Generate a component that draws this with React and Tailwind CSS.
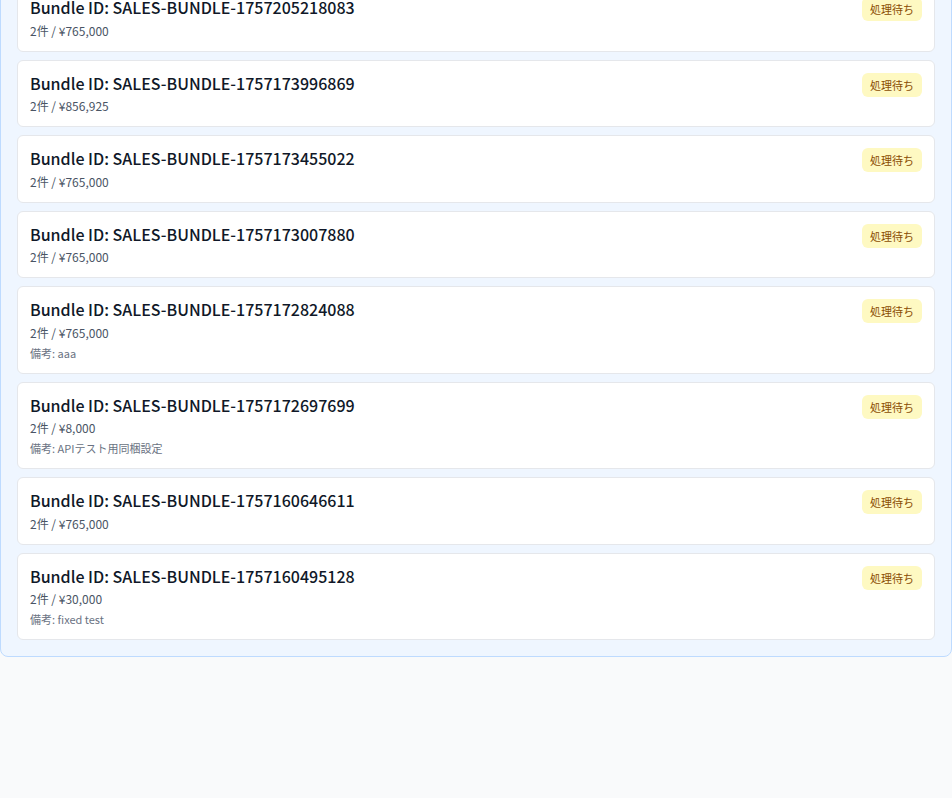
import React from 'react';

const bundles = [
  { id: 'SALES-BUNDLE-1757205218083', count: 2, total: 765000 },
  { id: 'SALES-BUNDLE-1757173996869', count: 2, total: 856925 },
  { id: 'SALES-BUNDLE-1757173455022', count: 2, total: 765000 },
  { id: 'SALES-BUNDLE-1757173007880', count: 2, total: 765000 },
  { id: 'SALES-BUNDLE-1757172824088', count: 2, total: 765000, note: 'aaa' },
  { id: 'SALES-BUNDLE-1757172697699', count: 2, total: 8000, note: 'APIテスト用同梱設定' },
  { id: 'SALES-BUNDLE-1757160646611', count: 2, total: 765000 },
  { id: 'SALES-BUNDLE-1757160495128', count: 2, total: 30000, note: 'fixed test' },
];

function BundleCard({ bundle }) {
  return (
    <div className="bg-white border border-gray-200 rounded-md p-3 flex justify-between items-start">
      <div>
        <h4 className="text-[16px] leading-[21.5px] font-medium text-gray-900">Bundle ID: {bundle.id}</h4>
        <div className="text-[12px] leading-4 mt-1 text-gray-600">
          {bundle.count}件 / ¥{bundle.total.toLocaleString()}
        </div>
        {bundle.note && (
          <div className="text-[11px] leading-4 mt-1 text-gray-500">備考: {bundle.note}</div>
        )}
      </div>
      <span className="bg-yellow-100 text-yellow-800 text-[11px] leading-4 px-2 py-1 rounded-md">処理待ち</span>
    </div>
  );
}

export default function App() {
  return (
    <div
      className="min-h-screen bg-gray-50 overflow-hidden"
      style={{ fontFamily: '"Noto Sans CJK JP", "Noto Sans", sans-serif' }}
    >
      <div className="-mt-[33px] bg-blue-50 border border-blue-200 rounded-lg p-4">
        <div className="space-y-2">
          {bundles.map((b) => (
            <BundleCard key={b.id} bundle={b} />
          ))}
        </div>
      </div>
    </div>
  );
}
